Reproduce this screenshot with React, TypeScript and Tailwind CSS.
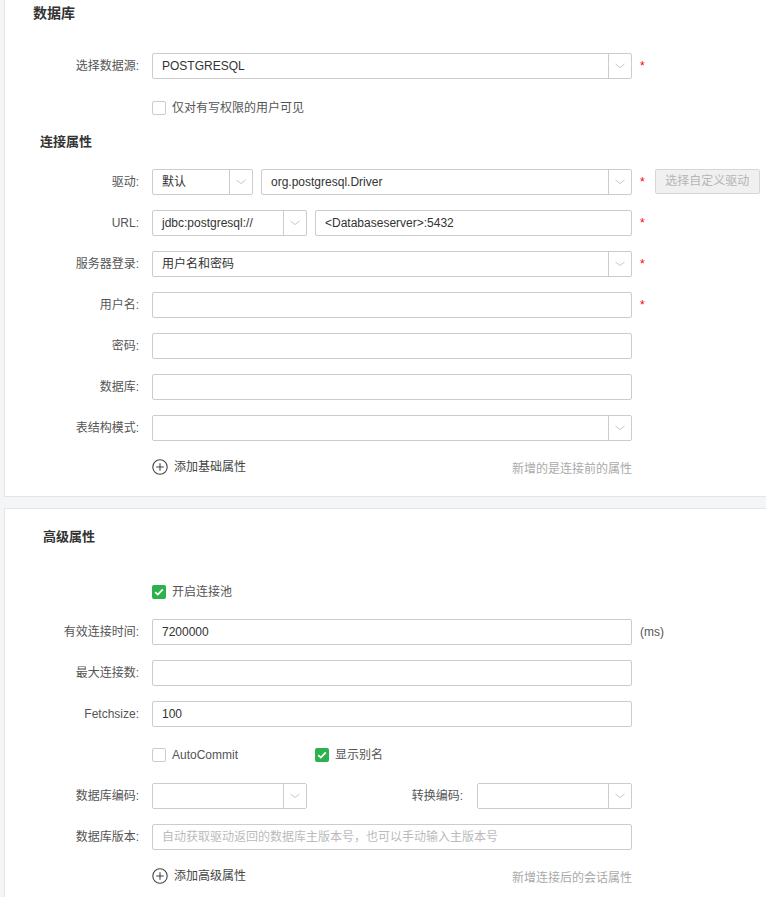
import React from "react";

function Chevron() {
  return (
    <svg width="10" height="6" viewBox="0 0 10 6" fill="none">
      <path d="M0.5 1 L5 4.5 L9.5 1" stroke="#c8c8c8" strokeWidth="1" />
    </svg>
  );
}

function Select({ value, width, placeholder }: { value?: string; width: string; placeholder?: string }) {
  return (
    <div className={`${width} h-[26px] flex border border-[#cccccc] rounded-[2px] bg-white shrink-0`}>
      <div className="flex-1 pl-[9px] text-[12px] leading-[24px] text-[#333] overflow-hidden whitespace-nowrap">
        {value}
        {placeholder ? <span className="text-[#bbb]">{placeholder}</span> : null}
      </div>
      <div className="w-[23px] border-l border-[#cccccc] flex items-center justify-center">
        <Chevron />
      </div>
    </div>
  );
}

function Input({ value, width = "w-[480px]", placeholder }: { value?: string; width?: string; placeholder?: string }) {
  return (
    <div className={`${width} h-[26px] border border-[#cccccc] rounded-[2px] bg-white px-[9px] text-[12px] leading-[24px] text-[#333] whitespace-nowrap overflow-hidden shrink-0`}>
      {value}
      {placeholder ? <span className="text-[#bbb]">{placeholder}</span> : null}
    </div>
  );
}

function Star() {
  return <span className="ml-[8px] mt-[7px] text-[12px] leading-[12px] text-[#ff0000] self-start">*</span>;
}

function Row({ label, children, className = "" }: { label: string; children: React.ReactNode; className?: string }) {
  return (
    <div className={`flex items-start h-[26px] ${className}`}>
      <div className="w-[134px] mr-[13px] shrink-0 text-right text-[12px] leading-[26px] text-[#555] whitespace-nowrap">{label}</div>
      {children}
    </div>
  );
}

function Check({ checked, label }: { checked?: boolean; label: string }) {
  return (
    <div className="flex items-center h-[20px]">
      {checked ? (
        <div className="w-[14px] h-[14px] rounded-[2px] bg-[#2bb24c] flex items-center justify-center">
          <svg width="10" height="8" viewBox="0 0 10 8" fill="none">
            <path d="M1.2 4.2 L3.8 6.6 L8.8 1.4" stroke="#fff" strokeWidth="1.8" />
          </svg>
        </div>
      ) : (
        <div className="w-[14px] h-[14px] rounded-[2px] border border-[#cccccc] bg-white" />
      )}
      <span className="ml-[6px] text-[12px] text-[#555]">{label}</span>
    </div>
  );
}

function AddRow({ label, hint }: { label: string; hint: string }) {
  return (
    <div className="flex h-[20px] items-center pl-[147px]">
      <div className="w-[480px] flex items-center justify-between">
        <div className="flex items-center">
          <svg width="16" height="16" viewBox="0 0 16 16" fill="none">
            <circle cx="8" cy="8" r="7.2" stroke="#444" strokeWidth="1.1" />
            <path d="M8 4.2 V11.8 M4.2 8 H11.8" stroke="#444" strokeWidth="1.1" />
          </svg>
          <span className="ml-[6px] text-[12px] text-[#444]">{label}</span>
        </div>
        <span className="mt-[3px] text-[12px] text-[#aaa]">{hint}</span>
      </div>
    </div>
  );
}

export default function App() {
  return (
    <div className="min-h-[897px] w-[766px] overflow-hidden bg-[#f4f5f7] pl-[4px] font-['Liberation_Sans','Noto_Sans_CJK_SC',sans-serif]">
      {/* Panel 1 */}
      <div className="bg-white border-l border-b border-[#e3e5e8] w-[800px] pb-[19px]">
        <div className="h-[26px] pl-[28px] text-[14px] leading-[26px] font-bold text-[#333]">数据库</div>
        <Row label="选择数据源:" className="mt-[27px]">
          <Select value="POSTGRESQL" width="w-[480px]" />
          <Star />
        </Row>
        <div className="mt-[19px] pl-[147px]">
          <Check label="仅对有写权限的用户可见" />
        </div>
        <div className="mt-[14px] h-[20px] pl-[35px] text-[13px] leading-[20px] font-bold text-[#333]">连接属性</div>
        <Row label="驱动:" className="mt-[17px]">
          <Select value="默认" width="w-[101px]" />
          <div className="ml-[8px]">
            <Select value="org.postgresql.Driver" width="w-[371px]" />
          </div>
          <Star />
          <div className="ml-[10px] w-[105px] h-[25px] border border-[#d6d6d6] rounded-[2px] bg-[#f0f0f0] text-center text-[12px] leading-[23px] text-[#b5b5b5]">
            选择自定义驱动
          </div>
        </Row>
        <Row label="URL:" className="mt-[15px]">
          <Select value="jdbc:postgresql://" width="w-[155px]" />
          <div className="ml-[8px]">
            <Input value="<Databaseserver>:5432" width="w-[317px]" />
          </div>
          <Star />
        </Row>
        <Row label="服务器登录:" className="mt-[15px]">
          <Select value="用户名和密码" width="w-[480px]" />
          <Star />
        </Row>
        <Row label="用户名:" className="mt-[15px]">
          <Input />
          <Star />
        </Row>
        <Row label="密码:" className="mt-[15px]">
          <Input />
        </Row>
        <Row label="数据库:" className="mt-[15px]">
          <Input />
        </Row>
        <Row label="表结构模式:" className="mt-[15px]">
          <Select width="w-[480px]" />
        </Row>
        <div className="mt-[16px]">
          <AddRow label="添加基础属性" hint="新增的是连接前的属性" />
        </div>
      </div>

      {/* Panel 2 */}
      <div className="mt-[11px] bg-white border-l border-t border-[#e3e5e8] w-[800px] pt-[18px] pb-[20px]">
        <div className="h-[20px] pl-[38px] text-[13px] leading-[20px] font-bold text-[#333]">高级属性</div>
        <div className="mt-[35px] pl-[147px]">
          <Check checked label="开启连接池" />
        </div>
        <Row label="有效连接时间:" className="mt-[17px]">
          <Input value="7200000" />
          <span className="ml-[8px] text-[12px] leading-[26px] text-[#555]">(ms)</span>
        </Row>
        <Row label="最大连接数:" className="mt-[15px]">
          <Input />
        </Row>
        <Row label="Fetchsize:" className="mt-[15px]">
          <Input value="100" />
        </Row>
        <div className="mt-[18px] pl-[147px] flex">
          <div className="w-[163px]">
            <Check label="AutoCommit" />
          </div>
          <Check checked label="显示别名" />
        </div>
        <Row label="数据库编码:" className="mt-[18px]">
          <Select width="w-[155px]" />
          <div className="w-[170px] pr-[14px] text-right text-[12px] leading-[26px] text-[#555]">转换编码:</div>
          <Select width="w-[155px]" />
        </Row>
        <Row label="数据库版本:" className="mt-[15px]">
          <Input placeholder="自动获取驱动返回的数据库主版本号，也可以手动输入主版本号" />
        </Row>
        <div className="mt-[16px]">
          <AddRow label="添加高级属性" hint="新增连接后的会话属性" />
        </div>
      </div>
    </div>
  );
}
